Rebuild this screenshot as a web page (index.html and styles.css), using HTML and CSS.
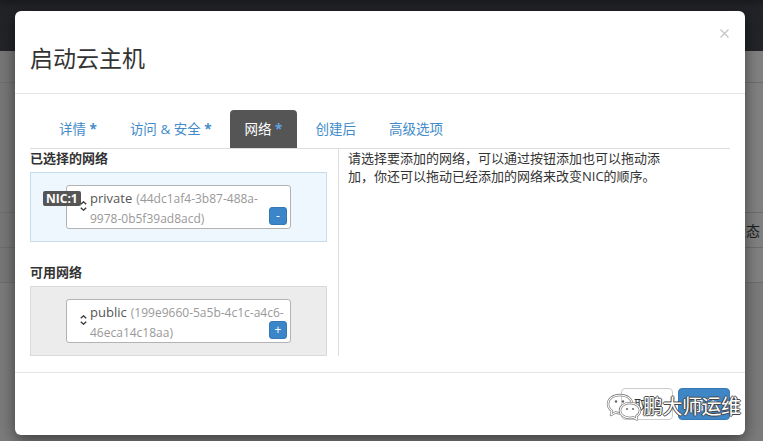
FILE: index.html
```html
<!DOCTYPE html>
<html lang="zh-CN">
<head>
<meta charset="utf-8">
<title>启动云主机</title>
<link rel="stylesheet" href="styles.css">
</head>
<body>
<div class="backdrop">
  <div class="navbar"></div>
  <div class="row r1"></div>
  <div class="row r2"></div>
  <div class="row r3"><span>状态</span></div>
  <div class="row r4"></div>
</div>

<div class="modal">
  <div class="modal-header">
    <h3 class="modal-title">启动云主机</h3>
    <div class="close">
      <svg width="11" height="11" viewBox="0 0 11 11"><path d="M1.5 1.5 L9.5 9.5 M9.5 1.5 L1.5 9.5" stroke="#c6c6c6" stroke-width="1.3" fill="none"/></svg>
    </div>
  </div>

  <div class="modal-body">
    <ul class="tabs">
      <li class="tab">详情 <b class="star">*</b></li>
      <li class="tab">访问 &amp; 安全 <b class="star">*</b></li>
      <li class="tab active">网络 <b class="star">*</b></li>
      <li class="tab">创建后</li>
      <li class="tab">高级选项</li>
    </ul>

    <div class="panes">
      <div class="left">
        <div class="label">已选择的网络</div>
        <div class="box sel">
          <div class="item">
            <span class="nic">NIC:1</span>
            <svg class="arrow" width="7" height="10" viewBox="0 0 7 10"><path d="M0.8 3.2 L3.5 0.8 L6.2 3.2 M0.8 6.8 L3.5 9.2 L6.2 6.8" stroke="#333" stroke-width="1.3" fill="none"/></svg>
            <div class="net"><span class="name">private</span> <span class="id">(44dc1af4-3b87-488a-</span><br><span class="id">9978-0b5f39ad8acd)</span></div>
            <span class="mini">-</span>
          </div>
        </div>

        <div class="label">可用网络</div>
        <div class="box avail">
          <div class="item">
            <svg class="arrow" width="7" height="10" viewBox="0 0 7 10"><path d="M0.8 3.2 L3.5 0.8 L6.2 3.2 M0.8 6.8 L3.5 9.2 L6.2 6.8" stroke="#333" stroke-width="1.3" fill="none"/></svg>
            <div class="net"><span class="name">public</span> <span class="id">(199e9660-5a5b-4c1c-a4c6-</span><br><span class="id">46eca14c18aa)</span></div>
            <span class="mini">+</span>
          </div>
        </div>
      </div>

      <div class="right">
        <p class="help">请选择要添加的网络，可以通过按钮添加也可以拖动添加，你还可以拖动已经添加的网络来改变NIC的顺序。</p>
      </div>
    </div>
  </div>

  <div class="modal-footer">
    <span class="btn btn-default">取消</span>
    <span class="btn btn-primary">启动</span>
  </div>
</div>

<div class="watermark">
  <svg class="wx" width="36" height="28" viewBox="0 0 36 28">
    <g fill="none" stroke-linejoin="round">
      <path d="M14 2 C7 2 2 6 2 11 C2 14 4 16.5 6 18 L5 22 L9.5 19.5 C11 20 12.5 20.2 14 20.2 C21 20.2 26 16 26 11 C26 6 21 2 14 2 Z" stroke="#777" stroke-width="2.4"/>
      <path d="M14 2 C7 2 2 6 2 11 C2 14 4 16.5 6 18 L5 22 L9.5 19.5 C11 20 12.5 20.2 14 20.2 C21 20.2 26 16 26 11 C26 6 21 2 14 2 Z" stroke="#fff" stroke-width="1.1"/>
      <path d="M24 10 C18 10 14 13.5 14 17.5 C14 21.5 18 25 24 25 C25.3 25 26.5 24.8 27.5 24.5 L31 26.5 L30.2 23.3 C32.3 22 34 20 34 17.5 C34 13.5 30 10 24 10 Z" fill="#fff" stroke="#777" stroke-width="2.4"/>
      <path d="M24 10 C18 10 14 13.5 14 17.5 C14 21.5 18 25 24 25 C25.3 25 26.5 24.8 27.5 24.5 L31 26.5 L30.2 23.3 C32.3 22 34 20 34 17.5 C34 13.5 30 10 24 10 Z" stroke="#fff" stroke-width="1.1"/>
    </g>
    <circle cx="10" cy="8.5" r="1.2" fill="#666"/>
    <circle cx="17" cy="8.5" r="1.2" fill="#666"/>
    <circle cx="21" cy="16" r="1" fill="#666"/>
    <circle cx="27" cy="16" r="1" fill="#666"/>
  </svg>
  <span class="wm-text">鹏大师运维</span>
</div>
</body>
</html>
```

FILE: styles.css
```css
* {
  box-sizing: border-box;
}

html,
body {
  margin: 0;
  padding: 0;
}

body {
  width: 763px;
  height: 441px;
  overflow: hidden;
  position: relative;
  background: #7b7b7b;
  font-family: "Open Sans", "Noto Sans CJK SC", sans-serif;
  color: #333;
}

/* page behind the dialog */
.navbar {
  height: 51px;
  background: linear-gradient(#191b1e 0, #212327 8px, #222428 100%);
}

.row {
  border-bottom: 1px solid #6d6d6d;
  background: linear-gradient(90deg, #777 0, #7c7c7c 50%, #818181 100%);
}

.r1 { height: 32px; }
.r2 { height: 130px; }
.r3 {
  height: 35px;
  display: flex;
  align-items: center;
  justify-content: flex-end;
  padding-right: 3px;
  font-size: 14px;
  color: #1d1d1d;
}
.r4 { height: 35px; }

/* dialog */
.modal {
  position: absolute;
  left: 15px;
  top: 11px;
  width: 730px;
  height: 424px;
  background: #fff;
  border-radius: 6px;
  box-shadow: 0 5px 15px rgba(0, 0, 0, 0.5);
  display: flex;
  flex-direction: column;
}

.modal-header {
  height: 83px;
  flex: none;
  display: flex;
  justify-content: space-between;
  align-items: flex-start;
  padding: 15px 15px 0;
  border-bottom: 1px solid #e5e5e5;
}

.modal-title {
  margin: 15px 0 0;
  font-size: 23px;
  line-height: 34px;
  font-weight: 400;
  color: #333;
}

.close {
  width: 11px;
  height: 11px;
  margin-top: 2px;
  display: flex;
}

.modal-body {
  height: 278px;
  flex: none;
  padding: 16px 15px 16px;
}

.tabs {
  list-style: none;
  margin: 0;
  padding: 0 0 0 14px;
  display: flex;
  border-bottom: 1px solid #ddd;
  height: 39px;
}

.tab {
  height: 38px;
  line-height: 38px;
  padding: 0 15px;
  margin-right: 3px;
  font-size: 13.5px;
  color: #428bca;
  border-radius: 4px 4px 0 0;
  white-space: nowrap;
}

.tab.active {
  background: #555;
  color: #fff;
}

.star {
  font-weight: 700;
  color: #428bca;
}

.tab.active .star {
  color: #5fa5e4;
}

.panes {
  display: flex;
  height: 207px;
}

.left {
  width: 309px;
  flex: none;
  padding-right: 11px;
  border-right: 1px solid #ddd;
}

.label {
  font-size: 13px;
  line-height: 18px;
  font-weight: 700;
  color: #333;
  margin-bottom: 5px;
}

.box {
  border: 1px solid #dcdcdc;
  padding: 12px 35px;
}

.box.sel {
  background: #edf7fd;
  border-color: #c6dce8;
  margin-bottom: 21px;
}

.box.avail {
  background: #ececec;
  border-color: #dadada;
}

.item {
  position: relative;
  height: 44px;
  display: flex;
  align-items: center;
  background: #fff;
  border: 1px solid #b3b3b3;
  border-radius: 3px;
  padding: 2px 3px 2px 13px;
}

.arrow {
  flex: none;
  margin-right: 3px;
  margin-top: -2px;
}

.net {
  align-self: flex-start;
  line-height: 19px;
  white-space: nowrap;
}

.name {
  font-size: 13px;
  color: #555;
}

.id {
  font-size: 12px;
  color: #999;
}

.nic {
  position: absolute;
  left: -24px;
  top: 5px;
  height: 15px;
  padding: 0 3px;
  background: #555;
  color: #fff;
  font-size: 12px;
  font-weight: 700;
  line-height: 15px;
  border-radius: 2px;
}

.mini {
  position: absolute;
  right: 3px;
  bottom: 3px;
  width: 18px;
  height: 18px;
  border-radius: 3px;
  background: #3b86c8;
  border: 1px solid #3478b6;
  color: #fff;
  font-size: 12px;
  line-height: 15px;
  text-align: center;
}

.right {
  padding-left: 9px;
}

.help {
  margin: 0;
  width: 318px;
  font-size: 13px;
  line-height: 18px;
  color: #333;
}

.modal-footer {
  flex: 1;
  border-top: 1px solid #e5e5e5;
  padding: 15px;
  display: flex;
  justify-content: flex-end;
  gap: 5px;
}

.btn {
  width: 52px;
  height: 32px;
  border-radius: 4px;
  border: 1px solid #ccc;
  font-size: 13px;
  line-height: 30px;
  text-align: center;
}

.btn-default {
  background: #fff;
  color: #333;
}

.btn-primary {
  background: #3f86c7;
  border-color: #3878b3;
  color: #fff;
}

/* watermark over the footer */
.watermark {
  position: absolute;
  left: 606px;
  top: 393px;
  display: flex;
  align-items: center;
  gap: 1px;
}

.wm-text {
  font-size: 20px;
  line-height: 28px;
  color: #fff;
  letter-spacing: -0.5px;
  text-shadow: 1px 0 0 #444, -1px 0 0 #444, 0 1px 0 #444, 0 -1px 0 #444;
}
```
